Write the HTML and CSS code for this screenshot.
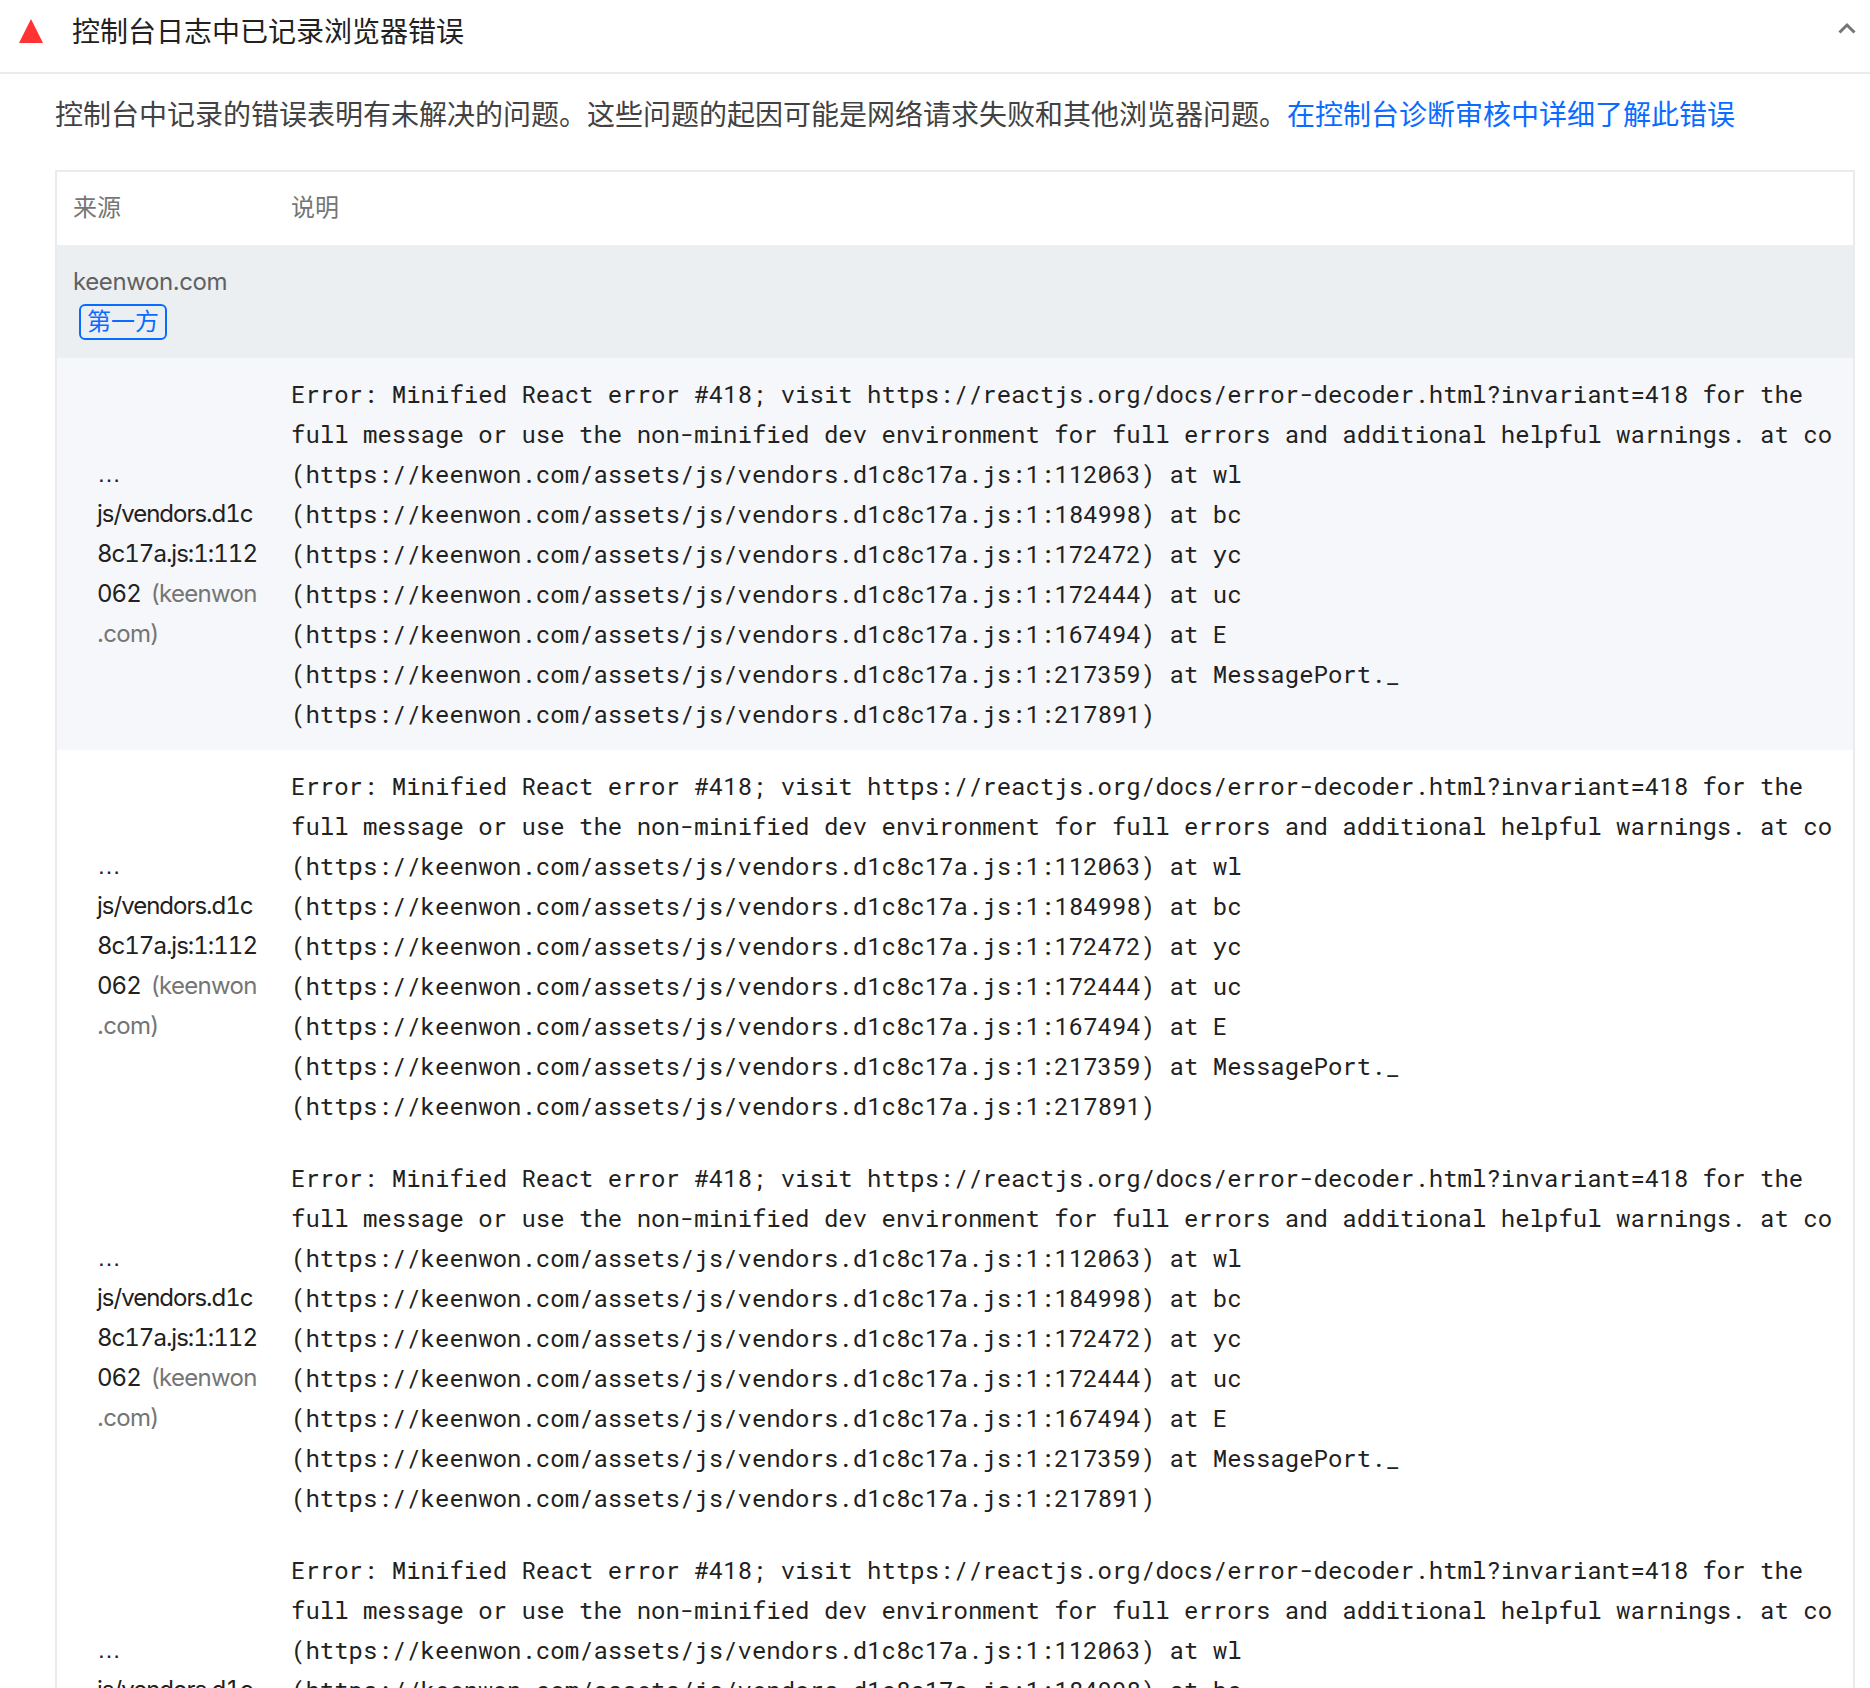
FILE: index.html
```html
<!DOCTYPE html>
<html lang="zh-CN">
<head>
<meta charset="utf-8">
<title>控制台日志中已记录浏览器错误</title>
<link rel="stylesheet" href="styles.css">
</head>
<body>
<section class="audit">
  <header class="audit-head">
    <svg class="icon-fail" viewBox="0 0 24 24" width="24" height="24" aria-hidden="true"><polygon points="12,0 24,24 0,24"/></svg>
    <h2 class="audit-title">控制台日志中已记录浏览器错误</h2>
    <svg class="icon-chevron" viewBox="0 0 18 12" width="18" height="12" aria-hidden="true"><path d="M1.5 10.5 9 3l7.5 7.5"/></svg>
  </header>
  <div class="audit-body">
    <p class="audit-desc">控制台中记录的错误表明有未解决的问题。这些问题的起因可能是网络请求失败和其他浏览器问题。<a class="audit-link" href="#">在控制台诊断审核中详细了解此错误</a></p>
    <table class="details">
      <thead>
        <tr><th class="col-source">来源</th><th>说明</th></tr>
      </thead>
      <tbody>
        <tr class="group-row"><td colspan="2"><span class="group-name">keenwon.com</span><br><span class="badge">第一方</span></td></tr>
        <tr class="row-striped">
          <td class="cell-source"><span class="ellipsis">…</span><span class="url">js/vendors.d1c<wbr>8c17a.js:1:112<wbr>062</span> <span class="host">(keenwon<wbr>.com)</span></td>
          <td class="cell-desc">Error: Minified React error #418; visit https://reactjs.org/docs/error-decoder.html?invariant=418 for the full message or use the non-minified dev environment for full errors and additional helpful warnings. at co (https://keenwon.com/assets/js/vendors.d1c8c17a.js:1:112063) at wl (https://keenwon.com/assets/js/vendors.d1c8c17a.js:1:184998) at bc (https://keenwon.com/assets/js/vendors.d1c8c17a.js:1:172472) at yc (https://keenwon.com/assets/js/vendors.d1c8c17a.js:1:172444) at uc (https://keenwon.com/assets/js/vendors.d1c8c17a.js:1:167494) at E (https://keenwon.com/assets/js/vendors.d1c8c17a.js:1:217359) at MessagePort._ (https://keenwon.com/assets/js/vendors.d1c8c17a.js:1:217891)</td>
        </tr>
        <tr>
          <td class="cell-source"><span class="ellipsis">…</span><span class="url">js/vendors.d1c<wbr>8c17a.js:1:112<wbr>062</span> <span class="host">(keenwon<wbr>.com)</span></td>
          <td class="cell-desc">Error: Minified React error #418; visit https://reactjs.org/docs/error-decoder.html?invariant=418 for the full message or use the non-minified dev environment for full errors and additional helpful warnings. at co (https://keenwon.com/assets/js/vendors.d1c8c17a.js:1:112063) at wl (https://keenwon.com/assets/js/vendors.d1c8c17a.js:1:184998) at bc (https://keenwon.com/assets/js/vendors.d1c8c17a.js:1:172472) at yc (https://keenwon.com/assets/js/vendors.d1c8c17a.js:1:172444) at uc (https://keenwon.com/assets/js/vendors.d1c8c17a.js:1:167494) at E (https://keenwon.com/assets/js/vendors.d1c8c17a.js:1:217359) at MessagePort._ (https://keenwon.com/assets/js/vendors.d1c8c17a.js:1:217891)</td>
        </tr>
        <tr>
          <td class="cell-source"><span class="ellipsis">…</span><span class="url">js/vendors.d1c<wbr>8c17a.js:1:112<wbr>062</span> <span class="host">(keenwon<wbr>.com)</span></td>
          <td class="cell-desc">Error: Minified React error #418; visit https://reactjs.org/docs/error-decoder.html?invariant=418 for the full message or use the non-minified dev environment for full errors and additional helpful warnings. at co (https://keenwon.com/assets/js/vendors.d1c8c17a.js:1:112063) at wl (https://keenwon.com/assets/js/vendors.d1c8c17a.js:1:184998) at bc (https://keenwon.com/assets/js/vendors.d1c8c17a.js:1:172472) at yc (https://keenwon.com/assets/js/vendors.d1c8c17a.js:1:172444) at uc (https://keenwon.com/assets/js/vendors.d1c8c17a.js:1:167494) at E (https://keenwon.com/assets/js/vendors.d1c8c17a.js:1:217359) at MessagePort._ (https://keenwon.com/assets/js/vendors.d1c8c17a.js:1:217891)</td>
        </tr>
        <tr>
          <td class="cell-source"><span class="ellipsis">…</span><span class="url">js/vendors.d1c<wbr>8c17a.js:1:112<wbr>062</span> <span class="host">(keenwon<wbr>.com)</span></td>
          <td class="cell-desc">Error: Minified React error #418; visit https://reactjs.org/docs/error-decoder.html?invariant=418 for the full message or use the non-minified dev environment for full errors and additional helpful warnings. at co (https://keenwon.com/assets/js/vendors.d1c8c17a.js:1:112063) at wl (https://keenwon.com/assets/js/vendors.d1c8c17a.js:1:184998) at bc (https://keenwon.com/assets/js/vendors.d1c8c17a.js:1:172472) at yc (https://keenwon.com/assets/js/vendors.d1c8c17a.js:1:172444) at uc (https://keenwon.com/assets/js/vendors.d1c8c17a.js:1:167494) at E (https://keenwon.com/assets/js/vendors.d1c8c17a.js:1:217359) at MessagePort._ (https://keenwon.com/assets/js/vendors.d1c8c17a.js:1:217891)</td>
        </tr>
      </tbody>
    </table>
  </div>
</section>
</body>
</html>
```

FILE: styles.css
```css
html, body {
  margin: 0;
  height: 100%;
  overflow: hidden;
  background: #fff;
}
body {
  font-family: Inter, "Noto Sans CJK SC", sans-serif;
  font-size: 24px;
  line-height: 40px;
  color: #212121;
}
.audit-head {
  display: flex;
  align-items: center;
  height: 72px;
  padding: 0 14px 0 19px;
  border-bottom: 2px solid #ebebeb;
}
.icon-fail {
  flex: none;
  fill: #ff3333;
  margin-bottom: 11px;
}
.audit-title {
  flex: 1;
  margin: 0 0 8px 29px;
  font-size: 28px;
  font-weight: 400;
  line-height: 40px;
}
.icon-chevron {
  flex: none;
  margin-bottom: 16px;
  fill: none;
  stroke: #757575;
  stroke-width: 3;
}
.audit-body {
  padding: 0 15px 0 55px;
}
.audit-desc {
  margin: 0;
  padding: 21px 0 35px;
  font-size: 28px;
  line-height: 40px;
  color: #424242;
}
.audit-link {
  color: #0a6cff;
  text-decoration: none;
}
.details {
  width: 100%;
  table-layout: fixed;
  border-collapse: separate;
  border-spacing: 0;
  border: 2px solid #ebebeb;
  border-bottom: 0;
}
.details th {
  height: 71px;
  padding: 0 16px 2px;
  text-align: left;
  font-weight: 400;
  color: #757575;
}
.col-source {
  width: 186px;
}
.group-row td {
  padding: 17px 16px 16px;
  background: #eceff2;
  color: #616161;
}
.group-name {
  letter-spacing: -0.4px;
}
.badge {
  display: inline-block;
  margin: -2px 0 0 6px;
  padding: 0 6px;
  height: 32px;
  line-height: 32px;
  border: 2px solid #0a6cff;
  border-radius: 6px;
  color: #0a6cff;
  vertical-align: middle;
}
.row-striped td {
  background: #f5f7fa;
}
.cell-source {
  padding: 16px 10px 16px 40px;
  vertical-align: middle;
  letter-spacing: -0.4px;
}
.ellipsis {
  display: block;
  font-family: "Liberation Sans", sans-serif;
  letter-spacing: 0;
}
.url {
  font-feature-settings: "tnum";
  letter-spacing: -1px;
}
.host {
  margin-left: 4px;
  letter-spacing: -0.7px;
  color: #757575;
}
.cell-desc {
  padding: 16px;
  vertical-align: top;
  font-family: "Roboto Mono", "DejaVu Sans Mono", monospace;
  font-size: 24px;
  letter-spacing: 0;
  color: #212121;
}
```
